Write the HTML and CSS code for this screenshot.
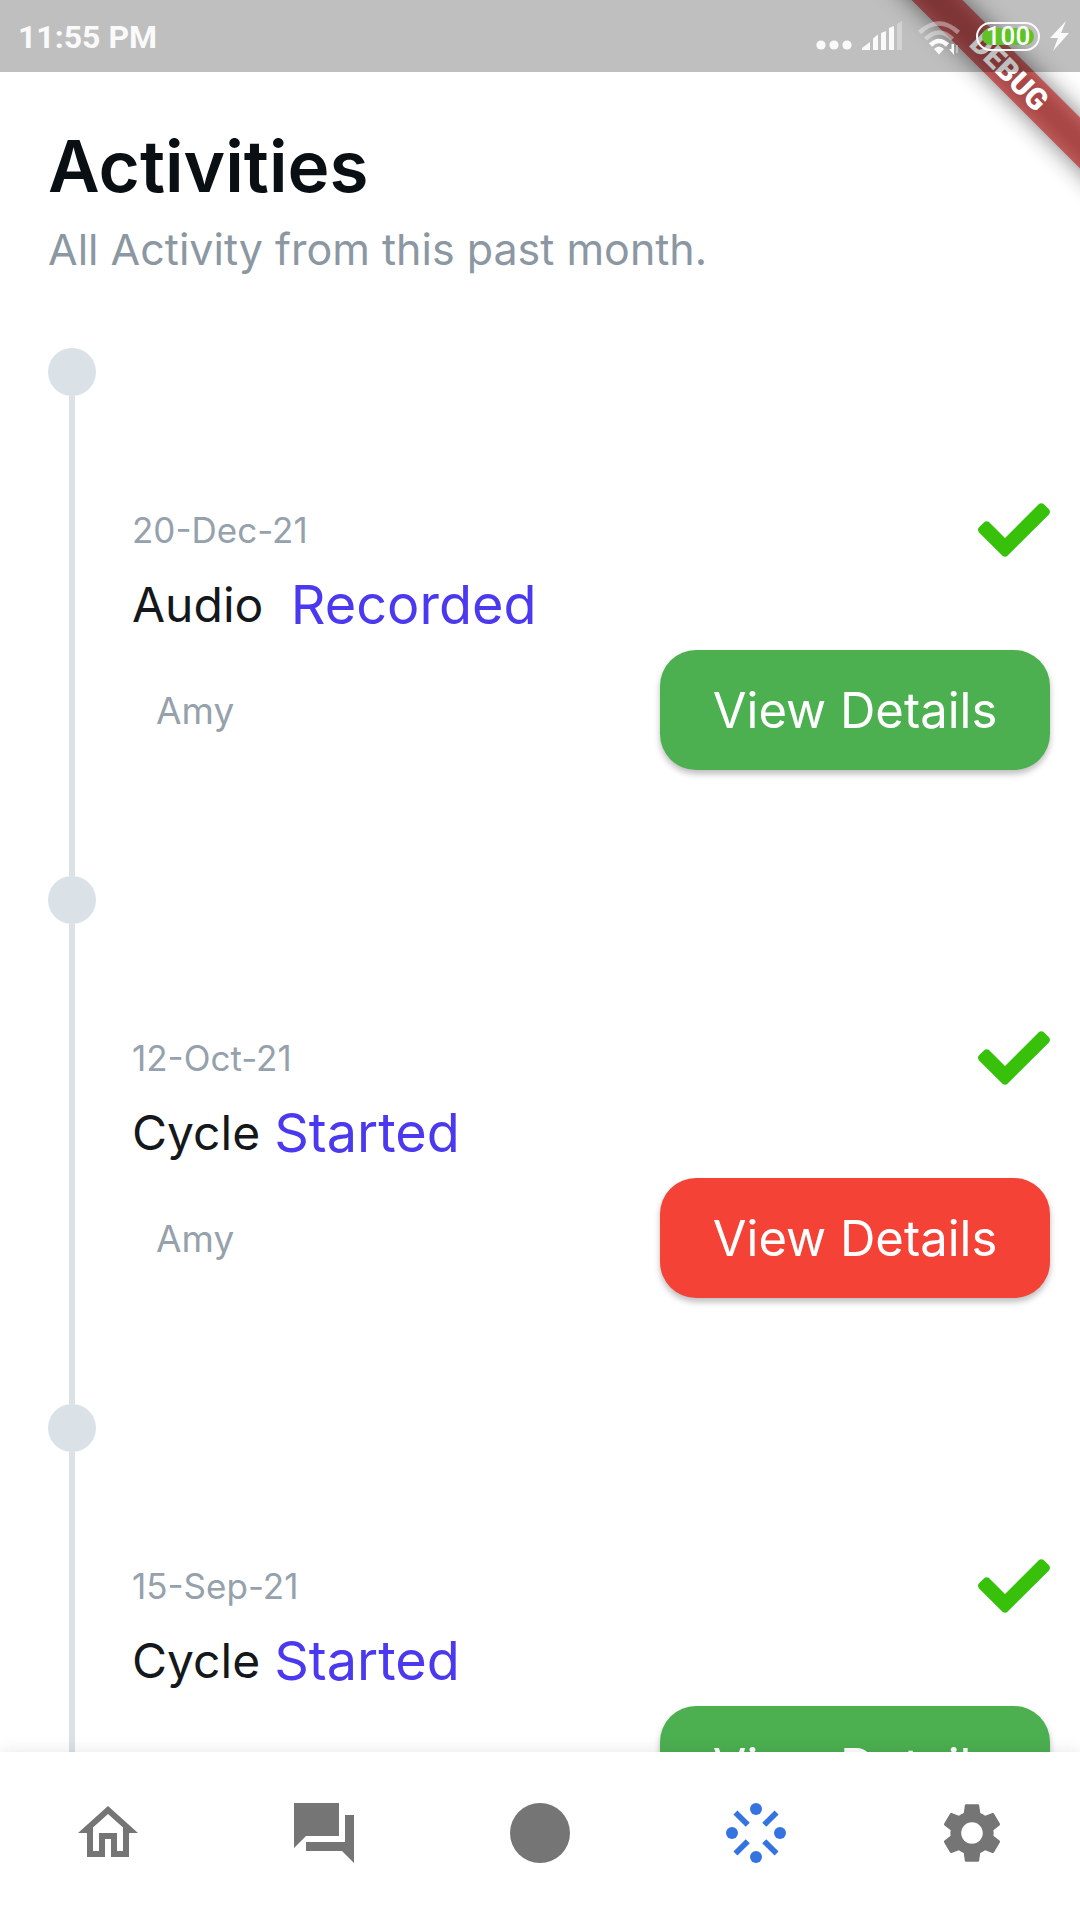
FILE: index.html
```html
<!DOCTYPE html>
<html lang="en">
<head>
  <meta charset="utf-8">
  <meta name="viewport" content="width=device-width, initial-scale=1">
  <title>Activities</title>
  <link rel="stylesheet" href="styles.css">
</head>
<body>
<div class="app">
  <div class="status-bar">
    <span class="status-time">11:55 PM</span>
    <div class="status-icons">
      <svg class="icon-dots" width="36" height="30" viewBox="0 0 36 30" aria-hidden="true"><circle cx="5" cy="24" r="4.6"/><circle cx="18" cy="24" r="4.6"/><circle cx="31" cy="24" r="4.6"/></svg>
      <svg class="icon-signal" width="40" height="30" viewBox="0 0 40 30" aria-hidden="true"><path d="M0 29v-2l8-6v8zM11 29V17.500l5-4V29zM19 29V12l5-2v19zM27 29V7l5-2v24z"/><path d="M35 29V3l5-3v29z" opacity=".35"/></svg>
      <svg class="icon-wifi" width="42" height="34" viewBox="0 0 42 34" aria-hidden="true"><g fill="none" stroke="#fafafa" stroke-width="4.500"><path d="M1.500 11.500Q21-6.500 40.500 11.500M7.500 18Q21 5 34.500 18" opacity=".4"/><path d="M12.500 24q8.500-8 17 0"/></g><path d="M16 28q5-5 10 0l-5 5.500zM31 28h2.500v-5H36v11z"/><path d="M38 24h2v8h-2z" opacity=".4"/></svg>
      <span class="battery"><span class="battery-level">100</span></span>
      <svg class="icon-bolt" width="19" height="30" viewBox="0 0 19 30" aria-hidden="true"><path d="M16 0L0 17h8L3 30 19 12h-8z"/></svg>
    </div>
  </div>
  <div class="debug-corner"><div class="debug-banner"><span>DEBUG</span></div></div>

  <main class="page">
    <header class="page-header">
      <h1>Activities</h1>
      <p>All Activity from this past month.</p>
    </header>
    <ol class="timeline">
      <li class="entry">
        <div class="marker"></div>
        <div class="entry-body">
          <div class="row-date"><time datetime="2021-12-20">20-Dec-21</time>
            <svg class="check" viewBox="0 65 512 382" role="img" aria-label="Completed"><path d="M173.898 439.404l-166.400-166.400c-9.997-9.997-9.997-26.206 0-36.204l36.203-36.204c9.997-9.998 26.207-9.998 36.204 0L192 312.690 432.095 72.596c9.997-9.997 26.207-9.997 36.204 0l36.203 36.204c9.997 9.997 9.997 26.206 0 36.204l-294.400 294.401c-9.998 9.997-26.207 9.997-36.204-.001z"/></svg></div>
          <h2 class="row-title"><span class="subject">Audio </span><span class="action">Recorded</span></h2>
          <div class="row-action"><span class="person">Amy</span><button type="button" class="details">View Details</button></div>
        </div>
      </li>
      <li class="entry">
        <div class="marker"></div>
        <div class="entry-body">
          <div class="row-date"><time datetime="2021-10-12">12-Oct-21</time>
            <svg class="check" viewBox="0 65 512 382" role="img" aria-label="Completed"><path d="M173.898 439.404l-166.400-166.400c-9.997-9.997-9.997-26.206 0-36.204l36.203-36.204c9.997-9.998 26.207-9.998 36.204 0L192 312.690 432.095 72.596c9.997-9.997 26.207-9.997 36.204 0l36.203 36.204c9.997 9.997 9.997 26.206 0 36.204l-294.400 294.401c-9.998 9.997-26.207 9.997-36.204-.001z"/></svg></div>
          <h2 class="row-title"><span class="subject">Cycle</span><span class="action">Started</span></h2>
          <div class="row-action"><span class="person">Amy</span><button type="button" class="details details-red">View Details</button></div>
        </div>
      </li>
      <li class="entry">
        <div class="marker"></div>
        <div class="entry-body">
          <div class="row-date"><time datetime="2021-09-15">15-Sep-21</time>
            <svg class="check" viewBox="0 65 512 382" role="img" aria-label="Completed"><path d="M173.898 439.404l-166.400-166.400c-9.997-9.997-9.997-26.206 0-36.204l36.203-36.204c9.997-9.998 26.207-9.998 36.204 0L192 312.690 432.095 72.596c9.997-9.997 26.207-9.997 36.204 0l36.203 36.204c9.997 9.997 9.997 26.206 0 36.204l-294.400 294.401c-9.998 9.997-26.207 9.997-36.204-.001z"/></svg></div>
          <h2 class="row-title"><span class="subject">Cycle</span><span class="action">Started</span></h2>
          <div class="row-action"><button type="button" class="details">View Details</button></div>
        </div>
      </li>
    </ol>
  </main>

  <nav class="tabs" aria-label="Main">
    <a class="tab" href="#home" aria-label="Home"><svg viewBox="0 0 24 24"><path d="M12 5.690l5 4.500V18h-2v-6H9v6H7v-7.810l5-4.500M12 3L2 12h3v8h6v-6h2v6h6v-8h3L12 3z"/></svg></a>
    <a class="tab" href="#messages" aria-label="Messages"><svg viewBox="0 0 24 24"><path d="M17 2H2v15l4-4h11zM22 6h-3v9H6v3h12l4 4z"/></svg></a>
    <a class="tab" href="#record" aria-label="Record"><svg viewBox="0 0 24 24"><circle cx="12" cy="12" r="10"/></svg></a>
    <a class="tab tab-active" href="#activities" aria-label="Activities" aria-current="page"><svg viewBox="0 0 24 24"><circle cx="12" cy="4" r="2"/><circle cx="20" cy="12" r="2"/><circle cx="12" cy="20" r="2"/><circle cx="4" cy="12" r="2"/><path d="M5.150 5.150l4.100 4.100M18.850 5.150l-4.100 4.100M5.150 18.850l4.100-4.100M18.850 18.850l-4.100-4.100" stroke="currentColor" stroke-width="1.900"/></svg></a>
    <a class="tab" href="#settings" aria-label="Settings"><svg viewBox="0 0 24 24"><path d="M19.140 12.940c.04-.3.06-.61.06-.94 0-.32-.02-.64-.07-.94l2.030-1.580c.18-.14.23-.41.12-.61l-1.920-3.320c-.12-.22-.37-.29-.59-.22l-2.390.96c-.5-.38-1.030-.7-1.620-.94L14.400 2.810c-.04-.24-.24-.41-.48-.41h-3.840c-.24 0-.43.17-.47.41L9.250 5.350C8.660 5.590 8.120 5.920 7.630 6.290L5.240 5.330c-.22-.08-.47 0-.59.22L2.740 8.870C2.620 9.080 2.660 9.340 2.860 9.480l2.030 1.580C4.840 11.360 4.800 11.690 4.800 12s.02.64.07.94l-2.030 1.580c-.18.14-.23.41-.12.61l1.920 3.320c.12.22.37.29.59.22l2.390-.96c.5.38 1.030.7 1.620.94l.36 2.540c.05.24.24.41.48.41h3.840c.24 0 .44-.17.47-.41l.36-2.540c.59-.24 1.130-.56 1.620-.94l2.390.96c.22.08.47 0 .59-.22l1.920-3.320c.12-.22.07-.47-.12-.61L19.140 12.940zM12 15.600c-1.980 0-3.600-1.620-3.600-3.600s1.620-3.600 3.600-3.600 3.600 1.620 3.600 3.600S13.980 15.600 12 15.600z"/></svg></a>
  </nav>
</div>
</body>
</html>
```
FILE: styles.css
```css
* {
  box-sizing: border-box;
}

body {
  margin: 0;
  background: #fff;
  font-family: Inter, "Open Sans", sans-serif;
}

h1, h2, p, ol {
  margin: 0;
  padding: 0;
}

.app {
  position: relative;
  display: flex;
  flex-direction: column;
  height: 100vh;
  overflow: hidden;
}

/* System status bar */
.status-bar {
  position: relative;
  z-index: 2;
  display: flex;
  flex: none;
  align-items: center;
  justify-content: space-between;
  height: 72px;
  padding: 0 11px 0 18px;
  background: rgba(0, 0, 0, .25);
  color: #fafafa;
  font-family: Roboto, sans-serif;
}

.status-time {
  padding-top: 2px;
  font-size: 32px;
  font-weight: 700;
  line-height: 40px;
}

.status-icons {
  display: flex;
  align-items: center;
  gap: 10px;
  fill: #fafafa;
}

.icon-wifi {
  margin: 4px 6px 0;
}

.battery {
  display: flex;
  width: 64px;
  height: 29px;
  padding: 4px;
  border: 2px solid #fafafa;
  border-radius: 15px;
}

.battery-level {
  flex: 1;
  border-radius: 9px;
  background: #5fc326;
  font-size: 26px;
  font-weight: 500;
  line-height: 17px;
  text-align: center;
}

/* Diagonal ribbon in the top right corner */
.debug-corner {
  position: absolute;
  z-index: 1;
  top: 0;
  right: 0;
  display: flex;
  align-items: center;
  justify-content: center;
  width: 143px;
  height: 143px;
}

.debug-banner {
  position: relative;
  flex: none;
  width: 320px;
  transform: rotate(45deg);
  color: #fff;
  font-family: Roboto, sans-serif;
  font-size: 30px;
  font-weight: 900;
  line-height: 36px;
  text-align: center;
}

.debug-banner::before {
  content: "";
  position: absolute;
  inset: 0;
  background: rgba(0, 0, 0, .5);
  filter: blur(12px);
}

.debug-banner span {
  position: relative;
  display: block;
  background: rgba(183, 28, 28, .63);
}

/* Page */
.page {
  flex: 1;
  min-height: 0;
  overflow: hidden;
  padding: 48px 30px 0 48px;
}

.page-header {
  padding-bottom: 62px;
}

.page-header h1 {
  color: #090f13;
  font-size: 71px;
  font-weight: 600;
  line-height: 92px;
}

.page-header p {
  color: #8b97a2;
  font-size: 43px;
  line-height: 74px;
}

.timeline {
  list-style: none;
}

.entry {
  display: flex;
  gap: 36px;
  height: 528px;
}

.marker {
  display: flex;
  flex: none;
  flex-direction: column;
  align-items: center;
  width: 48px;
}

.marker::before {
  content: "";
  width: 48px;
  height: 48px;
  border-radius: 50%;
  background: #dbe2e7;
}

.marker::after {
  content: "";
  flex: 1;
  width: 6px;
  background: #dbe2e7;
}

.entry-body {
  flex: 1;
  padding-top: 152px;
}

.row-date,
.row-action {
  display: flex;
  align-items: center;
  justify-content: space-between;
}

.row-date {
  height: 60px;
  color: #95a1ac;
  font-size: 35px;
}

.check {
  width: 72px;
  height: 54px;
  fill: #37c10b;
}

.row-title {
  display: flex;
  align-items: center;
  gap: 14px;
  height: 90px;
  padding-bottom: 2px;
  font-weight: 400;
  white-space: pre;
}

.subject {
  color: #14181b;
  font-size: 48px;
}

.action {
  color: #4b39ef;
  font-size: 54px;
}

.row-action {
  padding-left: 24px;
}

.person {
  color: #95a1ac;
  font-size: 37px;
}

.details {
  width: 390px;
  height: 120px;
  margin-left: auto;
  padding: 0;
  border: 0;
  border-radius: 36px;
  background: #4caf50;
  box-shadow: 0 4px 6px rgba(0, 0, 0, .26);
  color: #fff;
  font-family: inherit;
  font-size: 49px;
}

.details-red {
  background: #f44336;
}

/* Bottom tabs */
.tabs {
  position: relative;
  display: flex;
  flex: none;
  align-items: center;
  height: 168px;
  padding-bottom: 6px;
  background: #fff;
  box-shadow: 0 0 16px rgba(0, 0, 0, .1);
}

.tab {
  display: flex;
  flex: 1;
  justify-content: center;
  color: #757575;
}

.tab svg {
  width: 72px;
  height: 72px;
  fill: currentColor;
}

.tab-active {
  color: #3474e0;
}
```
